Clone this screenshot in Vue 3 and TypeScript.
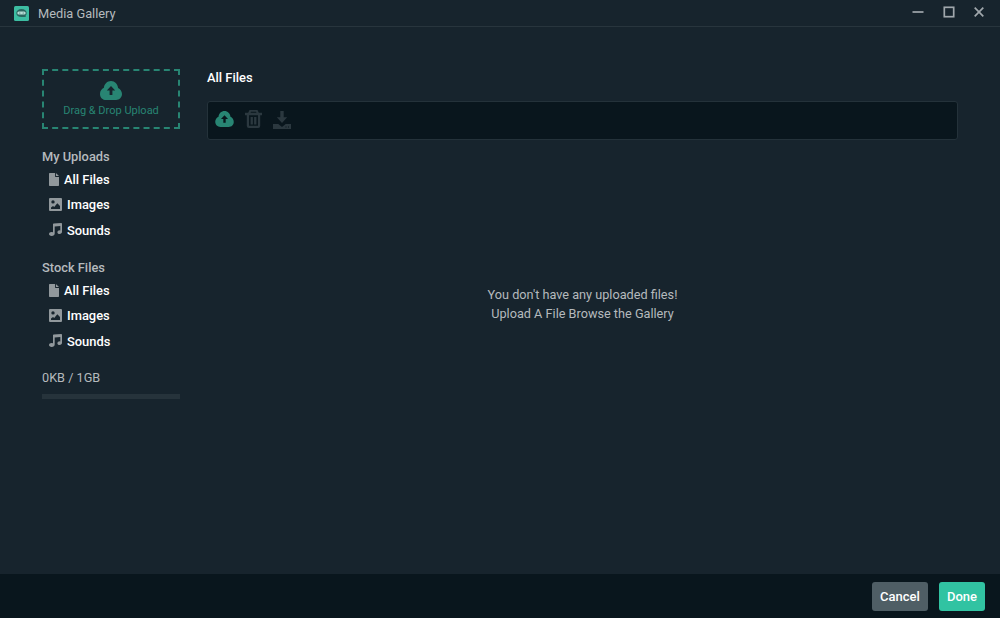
<script setup lang="ts">
type IconName = 'file' | 'image' | 'music'
interface Entry { label: string; icon: IconName }
interface Group { title: string; entries: Entry[] }

const entries: Entry[] = [
  { label: 'All Files', icon: 'file' },
  { label: 'Images', icon: 'image' },
  { label: 'Sounds', icon: 'music' },
]
const groups: Group[] = [
  { title: 'My Uploads', entries },
  { title: 'Stock Files', entries },
]
const cloud =
  'M11 0C7.2 0 4.3 2.8 3.9 6.8C1.600 7.800 0 10.100 0 12.900C0 16.500 2.700 19 6.200 19H16C19.400 19 22 16.500 22 13.100C22 10.300 20.400 7.900 18.100 6.900C17.700 2.900 14.800 0 11 0ZM11 5L15.200 9.400H12.400V14H9.600V9.400H6.800Z'
</script>

<template>
  <div class="window">
    <header class="titlebar">
      <svg class="logo" viewBox="0 0 15 15">
        <rect width="15" height="15" rx="1.500" fill="#3dbda2" />
        <path d="M7.500 3C4.400 3 2.300 4.700 2.300 7C2.300 9.400 4.400 11 7.500 11H11.800L11.600 9.800C12.300 9.100 12.700 8.100 12.700 7C12.700 4.700 10.600 3 7.500 3Z" fill="#2b665f" />
        <rect x="3.300" y="5.500" width="8.400" height="3" rx="1.500" fill="#b5dcd4" />
        <circle cx="5.800" cy="7" r=".6" fill="#41766f" />
        <circle cx="9.200" cy="7" r=".6" fill="#41766f" />
      </svg>
      <span class="title">Media Gallery</span>
      <div class="controls">
        <svg viewBox="0 0 12 12"><path d="M.5 6H11.500" /></svg>
        <svg viewBox="0 0 12 12"><rect x="1.300" y="1.300" width="9.400" height="9.400" /></svg>
        <svg viewBox="0 0 12 12"><path d="M1.700 1.700L10.300 10.300M10.300 1.700L1.700 10.300" /></svg>
      </div>
    </header>

    <main class="body">
      <aside class="sidebar">
        <div class="dropzone">
          <svg class="cloud" viewBox="0 0 22 19"><path :d="cloud" fill-rule="evenodd" /></svg>
          <span>Drag &amp; Drop Upload</span>
        </div>
        <section v-for="group in groups" :key="group.title" class="group">
          <h4>{{ group.title }}</h4>
          <ul>
            <li v-for="entry in group.entries" :key="entry.label">
              <svg v-if="entry.icon === 'file'" class="file" viewBox="0 0 10 13">
                <path d="M.7 0H6V3.300Q6 4 6.700 4H10V12.300Q10 13 9.300 13H.7Q0 13 0 12.300V.7Q0 0 .7 0ZM6.900 0L10 3.100H6.900Z" />
              </svg>
              <svg v-else-if="entry.icon === 'image'" viewBox="0 0 13 13">
                <path fill-rule="evenodd" d="M1 0H12Q13 0 13 1V12Q13 13 12 13H1Q0 13 0 12V1Q0 0 1 0ZM4 2.200A1.700 1.700 0 1 0 4 5.600A1.700 1.700 0 1 0 4 2.200ZM2 11H11V8L8.300 5.300L5.200 9L4 7.900L2 9.600Z" />
              </svg>
              <svg v-else viewBox="0 0 13 13">
                <path d="M4 1.200Q4 .5 4.700 .4L12.200 0Q13 0 13 .8V8.800C13 10.100 12 11 10.600 11S8.400 10.200 8.400 9.200S9.400 7.300 10.800 7.300L11.300 7.400V3L5.700 3.400V10.600C5.700 12.100 4.500 13 2.700 13C1 13 0 12.200 0 11.100S1 9.100 2.700 9.100L4 9.300Z" />
              </svg>
              <span>{{ entry.label }}</span>
            </li>
          </ul>
        </section>
        <div class="usage">0KB / 1GB</div>
        <div class="meter"></div>
      </aside>

      <section class="content">
        <h3>All Files</h3>
        <div class="toolbar">
          <svg class="upload" viewBox="0 0 22 19"><path :d="cloud" fill-rule="evenodd" /></svg>
          <svg class="trash" viewBox="0 0 17 18">
            <path fill-rule="evenodd" d="M4.500 0H12.500L13.800 2.800H17V5.200H15.200V16Q15.200 18 13.200 18H3.800Q1.800 18 1.800 16V5.200H0V2.800H3.200ZM6 1.700L5.500 2.800H11.500L11 1.700ZM4 5.200V15.800H13V5.200ZM5.600 7H7.900V14.400H5.600ZM9.100 7H11.400V14.400H9.100Z" />
          </svg>
          <svg class="download" viewBox="0 0 18 18">
            <path fill-rule="evenodd" d="M7.300 0H10.700V6.300H14.200L9 11.900L3.800 6.300H7.300ZM0 13H5.300L9 16L12.700 13H18V18H0ZM12.500 15.500V16.500H13.500V15.500ZM15 15.500V16.500H16V15.500Z" />
          </svg>
        </div>
        <div class="empty">
          <div>You don't have any uploaded files!</div>
          <div>Upload A File Browse the Gallery</div>
        </div>
      </section>
    </main>

    <footer class="footer">
      <button class="cancel">Cancel</button>
      <button class="done">Done</button>
    </footer>
  </div>
</template>

<style>
body { margin: 0; background: #17242d; }
</style>

<style scoped>
* { box-sizing: border-box; }
.window {
  display: flex;
  flex-direction: column;
  width: 1000px;
  height: 618px;
  overflow: hidden;
  background: #17242d;
  color: #b5babd;
  font: 12.700px/19px Roboto, sans-serif;
}
svg { display: block; flex: none; }
.titlebar {
  display: flex;
  align-items: center;
  height: 27px;
  padding: 0 14px;
  border-bottom: 1px solid #28353d;
}
.logo { width: 15px; height: 15px; margin-right: 9px; }
.title { font-size: 12.800px; }
.controls { display: flex; gap: 18.500px; margin: -3px 1px 0 auto; }
.controls svg { width: 12px; height: 12px; fill: none; stroke: #a0a7ac; stroke-width: 1.700; }
.body { display: flex; flex: 1; padding: 42px 42px 0; }
.sidebar { width: 138px; margin-right: 27px; }
.dropzone {
  display: flex;
  flex-direction: column;
  align-items: center;
  height: 60px;
  padding-top: 10px;
  margin-bottom: 18px;
  border: 2px dashed #288573;
  color: #288573;
  font-size: 11px;
  line-height: 21px;
}
.cloud { width: 22px; height: 19px; fill: #288573; }
.group { height: 111px; }
h4 { margin: 0; font-size: 12.850px; line-height: 20px; font-weight: 500; }
ul { margin: 0; padding: 0 0 0 7px; list-style: none; }
li {
  display: flex;
  align-items: center;
  height: 25.300px;
  color: #fff;
  font-size: 12.900px;
  font-weight: 500;
}
li svg { width: 13px; height: 13px; margin: -1px 5px 0 0; fill: #91989c; }
li .file { width: 10px; }
.usage { line-height: 18px; }
.meter { height: 5px; margin-top: 7px; background: #26333b; }
.content { width: 751px; }
h3 { margin: 0 0 15px; color: #fff; font-size: 12.900px; line-height: 17px; font-weight: 500; }
.toolbar {
  display: flex;
  align-items: center;
  height: 39px;
  padding: 0 7px 3px;
  border: 1px solid #24323a;
  border-radius: 3px;
  background: #09161d;
}
.upload { width: 19px; height: 16px; fill: #288573; }
.trash { width: 17px; height: 18px; margin-left: 11px; fill: #2b383f; }
.download { width: 18px; height: 18px; margin: 2px 0 0 11px; fill: #2b383f; }
.empty { margin-top: 145px; text-align: center; }
.footer {
  display: flex;
  justify-content: flex-end;
  gap: 11px;
  height: 44px;
  padding: 8px 15px;
  background: #09161d;
}
button {
  height: 29px;
  padding: 0;
  border: 0;
  border-radius: 3px;
  color: #fff;
  font: 500 13px/29px Roboto, sans-serif;
}
.cancel { width: 56px; background: #4f5e65; }
.done { width: 46px; background: #31c3a2; }
</style>
